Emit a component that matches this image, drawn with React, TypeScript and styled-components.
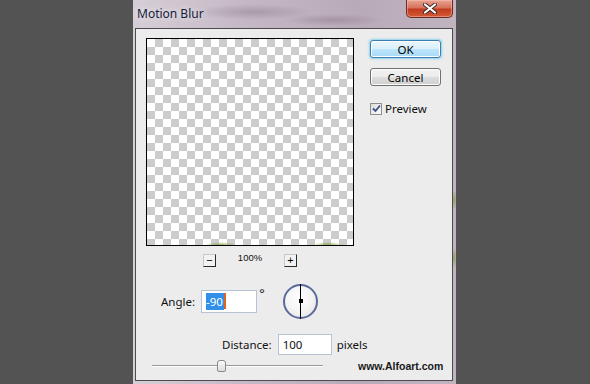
import styled, { createGlobalStyle } from 'styled-components'

const GlobalStyle = createGlobalStyle`
  html, body {
    margin: 0;
    padding: 0;
  }
  body {
    width: 590px;
    height: 384px;
    overflow: hidden;
    background: #535353;
    font-family: 'Noto Sans', 'Liberation Sans', sans-serif;
  }
`

const Page = styled.div`
  display: flex;
  height: 384px;
  padding-left: 133px;
`

const Frame = styled.div`
  display: flex;
  flex-direction: column;
  box-sizing: border-box;
  width: 323px;
  height: 384px;
  padding: 0 3px 3px 2px;
  background:
    radial-gradient(ellipse 60px 8px at 120px 12px, rgba(120, 100, 120, 0.35), transparent),
    radial-gradient(ellipse 50px 6px at 200px 20px, rgba(110, 90, 110, 0.3), transparent),
    radial-gradient(ellipse 3px 10px at 321px 200px, rgba(130, 150, 60, 0.7), transparent),
    radial-gradient(ellipse 3px 10px at 321px 258px, rgba(130, 150, 60, 0.7), transparent),
    linear-gradient(90deg, #d6ced6 0%, #c5b8c5 35%, #b9aab9 70%, #c0b4c0 100%);
`

const TitleBar = styled.div`
  display: flex;
  justify-content: space-between;
  align-items: flex-start;
  height: 28px;
`

const Title = styled.span`
  margin: 6px 0 0 2px;
  font-size: 12px;
  line-height: 16px;
  color: #14213a;
  text-shadow: 0 0 6px rgba(255, 255, 255, 0.9);
`

const CloseButton = styled.div`
  display: flex;
  align-items: center;
  justify-content: center;
  box-sizing: border-box;
  width: 47px;
  height: 18px;
  border: 1px solid #6b2a22;
  border-top: none;
  border-radius: 0 0 5px 5px;
  background: linear-gradient(180deg, #e8a493 0%, #d7725c 45%, #c23b1f 55%, #d45a34 100%);
  box-shadow: inset 0 0 0 1px rgba(255, 200, 190, 0.45);
`

const Content = styled.div`
  flex: 1;
  display: flex;
  flex-direction: column;
  padding: 9px 0 0 10px;
  border: 1px solid #4e4a50;
  background: #ececec;
`

const TopRow = styled.div`
  display: flex;
  gap: 16px;
`

const PreviewColumn = styled.div`
  display: flex;
  flex-direction: column;
  width: 208px;
`

const Preview = styled.div`
  box-sizing: border-box;
  width: 208px;
  height: 208px;
  border: 1px solid #000;
  background:
    radial-gradient(ellipse 16px 3px at 74px 206px, rgba(120, 150, 40, 0.75), transparent),
    radial-gradient(ellipse 16px 3px at 181px 206px, rgba(120, 150, 40, 0.75), transparent),
    repeating-conic-gradient(#cccccc 0 25%, #ffffff 0 50%) 0 0 / 16px 16px;
`

const ZoomRow = styled.div`
  display: flex;
  justify-content: space-between;
  align-items: flex-start;
  width: 94px;
  height: 13px;
  margin: 8px 0 0 57px;
`

const ZoomButton = styled.div`
  display: flex;
  align-items: center;
  justify-content: center;
  box-sizing: border-box;
  width: 13px;
  height: 13px;
  border: 1px solid #c8c8c8;
  border-right-color: #2a2a2a;
  border-bottom-color: #2a2a2a;
  background: #f2f2f2;
  font-family: 'Liberation Sans', sans-serif;
  font-size: 11px;
  line-height: 1;
  color: #000;
`

const ZoomLabel = styled.span`
  margin-top: -2px;
  font-family: 'Liberation Sans', sans-serif;
  font-size: 9.5px;
  color: #111;
`

const ButtonColumn = styled.div`
  display: flex;
  flex-direction: column;
  width: 71px;
  padding-top: 2px;
`

const DialogButton = styled.div<{ $primary?: boolean }>`
  display: flex;
  align-items: center;
  justify-content: center;
  box-sizing: border-box;
  height: 18px;
  margin-bottom: 10px;
  border: 1px solid ${(p) => (p.$primary ? '#3c7fb1' : '#707070')};
  border-radius: 3px;
  background: ${(p) =>
    p.$primary
      ? 'linear-gradient(180deg, #eaf6fd 0%, #d9f0fc 50%, #bee6fd 51%, #a7d9f5 100%)'
      : 'linear-gradient(180deg, #f2f2f2 0%, #ebebeb 50%, #dddddd 51%, #cfcfcf 100%)'};
  box-shadow: ${(p) =>
    p.$primary ? '0 0 2px 1px rgba(80, 190, 240, 0.6), inset 0 0 0 1px #fff' : 'inset 0 0 0 1px #fcfcfc'};
  font-size: 11.5px;
  color: #000;
`

const CheckRow = styled.div`
  display: flex;
  align-items: center;
  gap: 3px;
  margin-top: 5px;
  font-size: 11.5px;
  color: #111;
`

const CheckBox = styled.div`
  display: flex;
  align-items: center;
  justify-content: center;
  box-sizing: border-box;
  width: 12px;
  height: 12px;
  border: 1px solid #8e8f8f;
  background: linear-gradient(135deg, #dcdcdc, #fbfbfb);
`

const AngleRow = styled.div`
  display: flex;
  align-items: center;
  height: 34px;
  margin: 17px 0 0 15px;
`

const FieldLabel = styled.span`
  font-size: 11.5px;
  color: #111;
`

const Field = styled.div<{ $width: number; $height: number }>`
  display: flex;
  align-items: center;
  box-sizing: border-box;
  width: ${(p) => p.$width}px;
  height: ${(p) => p.$height}px;
  margin-left: 6px;
  padding-left: 4px;
  border: 1px solid #b7c3d3;
  background: #fff;
  font-size: 11.5px;
  color: #111;
`

const Selected = styled.span`
  padding: 1px 1px 1px 0;
  background: #3390ea;
  color: #fff;
`

const Caret = styled.span`
  width: 2px;
  height: 16px;
  background: #e0641c;
`

const Degree = styled.span`
  align-self: flex-start;
  margin: 1px 0 0 2px;
  font-family: 'Liberation Sans', sans-serif;
  font-size: 15px;
  line-height: 18px;
  color: #111;
`

const Dial = styled.div`
  position: relative;
  box-sizing: border-box;
  width: 35px;
  height: 35px;
  margin-left: 18px;
  border: 2px solid #5a6a9c;
  border-radius: 50%;
  background: radial-gradient(circle at 45% 40%, #ffffff 0%, #f4f4f4 50%, #dedede 100%);
`

const DialNeedle = styled.div`
  position: absolute;
  left: 50%;
  top: -2px;
  bottom: -2px;
  width: 1px;
  margin-left: -0.5px;
  background: #000;
`

const DialHub = styled.div`
  position: absolute;
  left: 50%;
  top: 50%;
  width: 4px;
  height: 4px;
  margin: -2px 0 0 -2px;
  background: #000;
`

const DistanceRow = styled.div`
  display: flex;
  align-items: center;
  margin: 16px 0 0 76px;
`

const Unit = styled.span`
  margin-left: 5px;
  font-size: 11.5px;
  color: #111;
`

const BottomRow = styled.div`
  display: flex;
  align-items: center;
  margin: 5px 0 0 6px;
`

const Slider = styled.div`
  position: relative;
  width: 171px;
  height: 12px;
  display: flex;
  align-items: center;
`

const Track = styled.div`
  width: 100%;
  height: 1px;
  border-bottom: 1px solid #ffffff;
  background: #9a9a9a;
`

const Thumb = styled.div`
  position: absolute;
  left: 65px;
  top: 0;
  box-sizing: border-box;
  width: 9px;
  height: 12px;
  border: 1px solid #8a8a8a;
  border-radius: 3px 3px 2px 2px;
  background: linear-gradient(180deg, #fbfbfb, #dcdcdc);
`

const Watermark = styled.span`
  margin-left: 35px;
  font-family: 'Liberation Sans', sans-serif;
  font-size: 10.5px;
  font-weight: bold;
  color: #1a1a1a;
`

export default function App() {
  return (
    <>
      <GlobalStyle />
      <Page>
        <Frame>
          <TitleBar>
            <Title>Motion Blur</Title>
            <CloseButton>
              <svg width="14" height="11" viewBox="0 0 14 11">
                <path
                  d="M2 1.5 L12 9.5 M12 1.5 L2 9.5"
                  stroke="#3a2a2a"
                  strokeWidth="4"
                  strokeLinecap="round"
                />
                <path
                  d="M2 1.5 L12 9.5 M12 1.5 L2 9.5"
                  stroke="#fff"
                  strokeWidth="2.2"
                  strokeLinecap="round"
                />
              </svg>
            </CloseButton>
          </TitleBar>
          <Content>
            <TopRow>
              <PreviewColumn>
                <Preview />
                <ZoomRow>
                  <ZoomButton>−</ZoomButton>
                  <ZoomLabel>100%</ZoomLabel>
                  <ZoomButton>+</ZoomButton>
                </ZoomRow>
              </PreviewColumn>
              <ButtonColumn>
                <DialogButton $primary>OK</DialogButton>
                <DialogButton>Cancel</DialogButton>
                <CheckRow>
                  <CheckBox>
                    <svg width="9" height="9" viewBox="0 0 9 9">
                      <path d="M1 4.5 L3.5 7 L8 1.5" stroke="#3a4f8a" strokeWidth="1.8" fill="none" />
                    </svg>
                  </CheckBox>
                  Preview
                </CheckRow>
              </ButtonColumn>
            </TopRow>
            <AngleRow>
              <FieldLabel>Angle:</FieldLabel>
              <Field $width={56} $height={23}>
                <Selected>-90</Selected>
                <Caret />
              </Field>
              <Degree>°</Degree>
              <Dial>
                <DialNeedle />
                <DialHub />
              </Dial>
            </AngleRow>
            <DistanceRow>
              <FieldLabel>Distance:</FieldLabel>
              <Field $width={54} $height={21}>
                100
              </Field>
              <Unit>pixels</Unit>
            </DistanceRow>
            <BottomRow>
              <Slider>
                <Track />
                <Thumb />
              </Slider>
              <Watermark>www.Alfoart.com</Watermark>
            </BottomRow>
          </Content>
        </Frame>
      </Page>
    </>
  )
}
